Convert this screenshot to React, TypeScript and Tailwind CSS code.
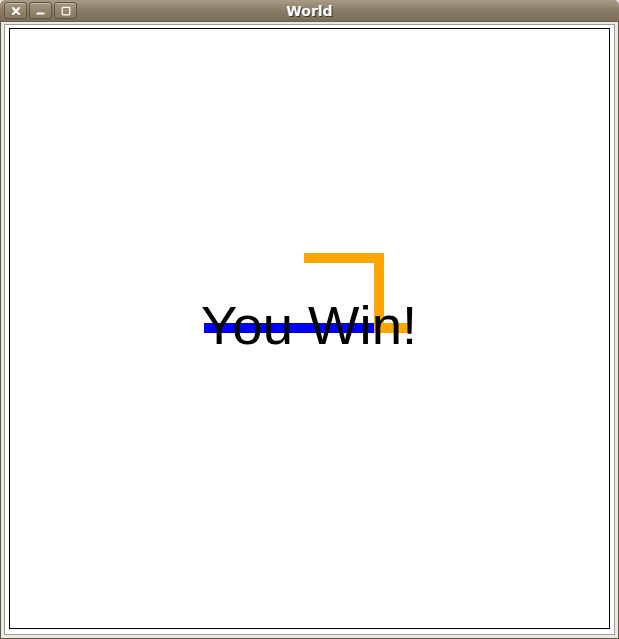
import { X, Minus, Square } from "lucide-react";

function TitleButton({ children }: { children: React.ReactNode }) {
  return (
    <div className="w-[23px] h-[17px] rounded-[3px] border border-[#5e5444] bg-gradient-to-b from-[#a4977f] to-[#857861] shadow-[inset_0_1px_0_rgba(255,255,255,0.35)] flex items-center justify-center text-white">
      {children}
    </div>
  );
}

export default function App() {
  return (
    <div className="w-[619px] h-[639px] flex flex-col bg-[#ebe9e4] font-['Liberation_Sans',sans-serif]">
      {/* Title bar */}
      <div className="h-[22px] shrink-0 rounded-t-[5px] bg-gradient-to-b from-[#a89c86] via-[#8a7d67] to-[#7b6e58] border-b border-[#6a604f] relative flex items-center px-[4px] gap-[2px]">
        <TitleButton>
          <X className="w-[12px] h-[12px]" strokeWidth={4} />
        </TitleButton>
        <TitleButton>
          <Minus className="w-[11px] h-[11px] translate-y-[3px]" strokeWidth={4} />
        </TitleButton>
        <TitleButton>
          <Square className="w-[10px] h-[10px]" strokeWidth={3} />
        </TitleButton>
        <span className="absolute left-0 right-0 text-center top-[1px] text-[14px] font-bold text-white font-['DejaVu_Sans',sans-serif] [text-shadow:1px_1px_0_#3a3428] pointer-events-none">
          World
        </span>
      </div>

      {/* Window frame */}
      <div className="flex-1 flex flex-col border-x border-b border-[#5f5647] pt-[2px] px-[3px] pb-[3px]">
        <div className="flex-1 border border-[#9e9a92] bg-white pt-[3px] px-[4px] pb-[4px]">
          <div className="w-[601px] h-[601px] border border-black bg-white">
            <svg width="599" height="599" viewBox="0 0 599 599">
              <rect x="194" y="294" width="170" height="10" fill="#0000ff" />
              <rect x="294" y="224" width="80" height="10" fill="#ffa500" />
              <rect x="364" y="224" width="10" height="80" fill="#ffa500" />
              <rect x="364" y="294" width="36" height="10" fill="#ffa500" />
              <text
                x="191"
                y="315"
                fontSize="54.5"
                fill="#000000"
                fontFamily="'Liberation Sans', Arial, sans-serif"
              >
                You Win!
              </text>
            </svg>
          </div>
        </div>
      </div>
    </div>
  );
}
